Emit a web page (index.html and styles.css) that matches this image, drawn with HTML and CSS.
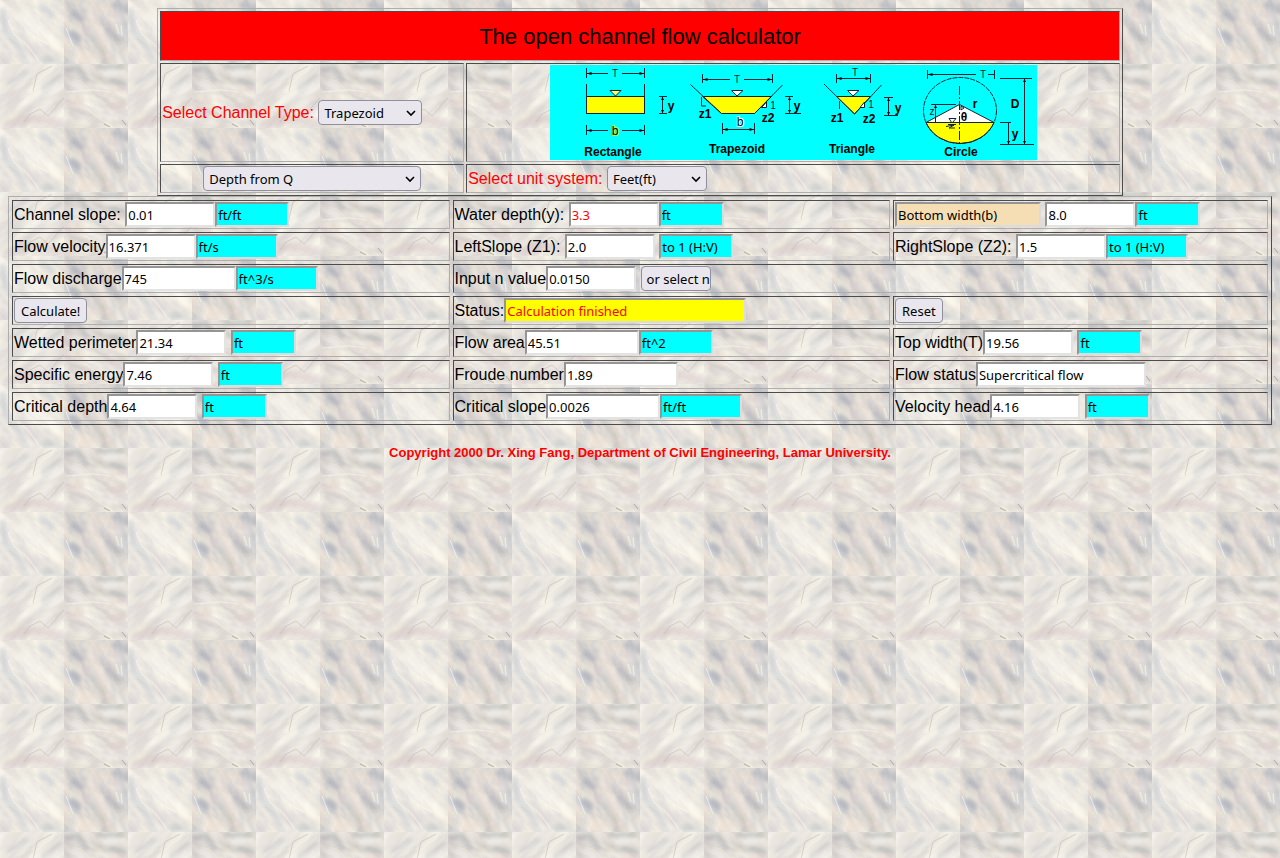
FILE: index.html
```html
<!DOCTYPE html>
<html lang="en">
<head>
<meta charset="utf-8">
<title>The open channel flow calculator</title>
<link rel="stylesheet" href="styles.css">
</head>
<body>
<form>
<table class="setup">
<colgroup><col class="setup-type"><col></colgroup>
<tr><th colspan="2" class="title">The open channel flow calculator</th></tr>
<tr>
<td class="red"><label for="type">Select Channel Type:</label> <select id="type" class="select s-type"><option>Trapezoid</option><option>Rectangle</option><option>Triangle</option><option>Circle</option></select></td>
<td class="center">
<svg class="diagram" viewBox="0 0 487 95" role="img" aria-label="Channel cross sections">
<defs>
<marker id="arrow" viewBox="0 0 6 4" refX="6" refY="2" markerWidth="5" markerHeight="3" orient="auto-start-reverse"><path d="M0 0L6 2L0 4z"/></marker>
<marker id="tip" viewBox="0 0 3 3" refX="3" refY="1.500" markerWidth="3" markerHeight="3" orient="auto-start-reverse"><path d="M0 0L3 1.500L0 3z"/></marker>
</defs>
<rect width="487" height="95" fill="#0ff"/>
<g stroke="#123" fill="none">
<path d="M36.500 19V31M94.500 19V31M36.500 3V13M94.500 3V13M36.500 60V70M94.500 60V70M109 31.500H117M109 48.500H117"/>
<path d="M58 8.500H37" marker-end="url(#arrow)"/><path d="M72 8.500H94" marker-end="url(#arrow)"/>
<path d="M58 65.500H37" marker-end="url(#arrow)"/><path d="M72 65.500H94" marker-end="url(#arrow)"/>
<path d="M112.500 32V48" marker-start="url(#tip)" marker-end="url(#tip)"/>
<rect x="36.500" y="31.500" width="58" height="17" fill="#ff0"/>
<path d="M60 25.500H71L65.500 31z" fill="#ff6"/>
<path d="M152.500 31.500H221.500L204.500 48.500H171.500z" fill="#ff0"/>
<path d="M140.500 19.500L171.500 48.500M204.500 48.500L232.500 20M152.500 9V18M222.500 9V18M172.500 58V69M204.500 58V69M151.500 32V41H156M235 31.500H243M235 48.500H251"/>
<path d="M180 14.500H153" marker-end="url(#arrow)"/><path d="M194 14.500H222" marker-end="url(#arrow)"/>
<path d="M173 64.500H204" marker-start="url(#arrow)" marker-end="url(#arrow)"/>
<path d="M239.500 32V48" marker-start="url(#tip)" marker-end="url(#tip)"/>
<path d="M181.500 25.500H193L187 31zM211.500 42.500H216.500V37z" fill="#fff"/>
<path d="M286.500 31.500H320.500L304.500 49z" fill="#ff0"/>
<path d="M274 19L304.500 49L331.500 20M286.500 9V18M320.500 9V18M289.500 36V44M334 32.500H343M334 50.500H348"/>
<path d="M287 13.500H320" marker-start="url(#arrow)" marker-end="url(#arrow)"/>
<path d="M338.500 33V50" marker-start="url(#tip)" marker-end="url(#tip)"/>
<path d="M297.500 25.500H309L303 31zM310 42.500H314.500V37z" fill="#fff"/>
<path d="M376 57.500H444A36.500 33 0 0 1 376 57.500z" fill="#ff0"/>
<path d="M376 57.500L409.500 39.500L444 57.500z" fill="#fff"/>
<ellipse cx="410" cy="45.500" rx="36.500" ry="33" stroke-dasharray="5 1"/>
<path d="M409.500 21V78" stroke-dasharray="9 2 2 2"/>
<path d="M377.500 5V14M444.500 5V14M381 39.500H406M450 13.500H482M450 79.500H484M450 57.500H461M398 59.500H406M396 61.500L404 60L399 63H405"/>
<path d="M426 9.500H378" marker-end="url(#arrow)"/><path d="M438 9.500H444"/>
<path d="M385.500 40V57M458.500 58V79" marker-start="url(#tip)" marker-end="url(#tip)"/>
<path d="M474.500 14V79" marker-start="url(#tip)" marker-end="url(#tip)"/>
<path d="M399 53.500H406L402 58zM411 41V45L414 43z" fill="#fff"/>
</g>
<g class="dim"><text x="65" y="12">T</text><text x="187" y="18">T</text><text x="305" y="11">T</text><text x="433" y="13">T</text><text x="382" y="50">z</text><text x="223" y="44">1</text><text x="321" y="43">1</text></g>
<g class="var"><text x="65" y="70" class="lime">b</text><text x="190" y="61" class="pale">b</text><text x="121" y="45">y</text><text x="247" y="45">y</text><text x="348" y="47">y</text><text x="465" y="73">y</text><text x="155" y="53">z1</text><text x="218" y="57">z2</text><text x="287" y="57">z1</text><text x="319" y="58">z2</text><text x="425" y="43">r</text><text x="414" y="56">θ</text><text x="465" y="43">D</text></g>
<g class="name"><text x="63" y="91">Rectangle</text><text x="187" y="88">Trapezoid</text><text x="302" y="88">Triangle</text><text x="411" y="91">Circle</text></g>
</svg>
</td>
</tr>
<tr>
<td class="center"><select class="select s-mode" aria-label="Calculation mode"><option>Depth from Q</option></select></td>
<td class="red"><label for="units">Select unit system:</label> <select id="units" class="select s-unit"><option>Feet(ft)</option><option>Meter(m)</option></select></td>
</tr>
</table>

<table class="values">
<colgroup><col class="values-a"><col class="values-b"><col></colgroup>
<tr>
<td><label for="slope">Channel slope:</label> <input id="slope" class="box w90" value="0.01"><input class="box unit w74" value="ft/ft" aria-label="Slope unit"></td>
<td><label for="depth">Water depth(y):</label> <input id="depth" class="box w90 red" value="3.3"><input class="box unit w65" value="ft" aria-label="Depth unit"></td>
<td><input class="box wheat w146" value="Bottom width(b)" aria-label="Dimension name"> <input class="box w90" value="8.0" aria-label="Bottom width"><input class="box unit w65" value="ft" aria-label="Width unit"></td>
</tr>
<tr>
<td><label for="vel">Flow velocity</label><input id="vel" class="box w90" value="16.371"><input class="box unit w82" value="ft/s" aria-label="Velocity unit"></td>
<td><label for="z1">LeftSlope (Z1):</label> <input id="z1" class="box w90" value="2.0"> <input class="box unit w74" value="to 1 (H:V)" aria-label="Left slope unit"></td>
<td><label for="z2">RightSlope (Z2):</label> <input id="z2" class="box w90" value="1.5"><input class="box unit w82" value="to 1 (H:V)" aria-label="Right slope unit"></td>
</tr>
<tr>
<td><label for="flow">Flow discharge</label><input id="flow" class="box w114" value="745"><input class="box unit w82" value="ft^3/s" aria-label="Discharge unit"></td>
<td colspan="2"><label for="n">Input n value</label><input id="n" class="box w90" value="0.0150"> <button type="button" class="button pick">or select n</button></td>
</tr>
<tr>
<td><button type="button" class="button">Calculate!</button></td>
<td><label for="status">Status:</label><input id="status" class="box status w242" value="Calculation finished"></td>
<td><button type="reset" class="button">Reset</button></td>
</tr>
<tr>
<td><label for="perim">Wetted perimeter</label><input id="perim" class="box w90" value="21.34"> <input class="box unit w65" value="ft" aria-label="Perimeter unit"></td>
<td><label for="area">Flow area</label><input id="area" class="box w114" value="45.51"><input class="box unit w74" value="ft^2" aria-label="Area unit"></td>
<td><label for="top">Top width(T)</label><input id="top" class="box w90" value="19.56"> <input class="box unit w65" value="ft" aria-label="Top width unit"></td>
</tr>
<tr>
<td><label for="energy">Specific energy</label><input id="energy" class="box w90" value="7.46"> <input class="box unit w65" value="ft" aria-label="Energy unit"></td>
<td><label for="froude">Froude number</label><input id="froude" class="box w114" value="1.89"></td>
<td><label for="state">Flow status</label><input id="state" class="box w170" value="Supercritical flow"></td>
</tr>
<tr>
<td><label for="cdepth">Critical depth</label><input id="cdepth" class="box w90" value="4.64"> <input class="box unit w65" value="ft" aria-label="Critical depth unit"></td>
<td><label for="cslope">Critical slope</label><input id="cslope" class="box w114" value="0.0026"><input class="box unit w82" value="ft/ft" aria-label="Critical slope unit"></td>
<td><label for="head">Velocity head</label><input id="head" class="box w90" value="4.16"> <input class="box unit w65" value="ft" aria-label="Head unit"></td>
</tr>
</table>
</form>
<p class="copyright">Copyright 2000 Dr. Xing Fang, Department of Civil Engineering, Lamar University.</p>
</body>
</html>
```

FILE: styles.css
```css
body {
  margin: 8px;
  font: 16px/25px Helvetica, "Liberation Sans", Arial, sans-serif;
  color: #000;
  background-color: #e4dfda;
  /* marble: four 64px stones in a repeating 128px tile */
  background-image: url("data:image/svg+xml,%3Csvg xmlns='http://www.w3.org/2000/svg' width='128' height='128'%3E%3Cdefs%3E%3Cfilter id='a' x='0' y='0' width='1' height='1' color-interpolation-filters='sRGB'%3E%3CfeTurbulence type='fractalNoise' baseFrequency='.035 .1' numOctaves='4' seed='4'/%3E%3CfeColorMatrix values='.2 .03 0 0 .815 .17 .05 0 0 .805 .1 .05 .03 0 .795 0 0 0 0 1'/%3E%3C/filter%3E%3Cfilter id='b' x='0' y='0' width='1' height='1' color-interpolation-filters='sRGB'%3E%3CfeTurbulence type='fractalNoise' baseFrequency='.04 .09' numOctaves='4' seed='12'/%3E%3CfeColorMatrix values='.27 .03 0 0 .72 .22 .08 0 0 .7 .15 .1 .03 0 .69 0 0 0 0 1'/%3E%3C/filter%3E%3Cfilter id='c' x='0' y='0' width='1' height='1' color-interpolation-filters='sRGB'%3E%3CfeTurbulence type='fractalNoise' baseFrequency='.03 .1' numOctaves='4' seed='21'/%3E%3CfeColorMatrix values='.16 .03 0 0 .825 .18 .03 0 0 .8 .14 .05 .03 0 .77 0 0 0 0 1'/%3E%3C/filter%3E%3Cfilter id='d' x='0' y='0' width='1' height='1' color-interpolation-filters='sRGB'%3E%3CfeTurbulence type='fractalNoise' baseFrequency='.04 .09' numOctaves='4' seed='33'/%3E%3CfeColorMatrix values='.22 .04 0 0 .77 .24 .04 0 0 .74 .18 .08 .03 0 .71 0 0 0 0 1'/%3E%3C/filter%3E%3Cfilter id='s'%3E%3CfeGaussianBlur stdDeviation='2'/%3E%3C/filter%3E%3C/defs%3E%3Csvg width='64' height='64'%3E%3Crect x='-30' y='-70' width='150' height='140' transform='rotate(50)' filter='url(%23a)'/%3E%3Cg filter='url(%23s)' fill='none' stroke-width='5' opacity='.4'%3E%3Cpath d='M3 8L5 30L18 46L26 60M40 6L54 17M42 60H54' stroke='%23a6b8c8'/%3E%3Cpath d='M0 52L8 64M20 34L34 56' stroke='%23b8a8b8' stroke-width='3'/%3E%3Cpath d='M20 12L38 30L58 47' stroke='%23fffdf4' stroke-width='12'/%3E%3C/g%3E%3Cpath d='M8 20L14 34L28 46L38 60M24 28L36 38L48 44' fill='none' stroke='%23fffbf0' opacity='.6'/%3E%3C/svg%3E%3Csvg x='64' width='64' height='64'%3E%3Crect x='-30' y='-70' width='150' height='140' transform='rotate(60)' filter='url(%23b)'/%3E%3Cg filter='url(%23s)' fill='none' stroke-width='7' opacity='.4'%3E%3Cpath d='M7 12L20 20M6 32L16 40M42 28L58 42M50 2L64 12' stroke='%238993a6'/%3E%3Cpath d='M34 3L30 20L42 50M14 56H50' stroke='%23eadbd0' stroke-width='8'/%3E%3Cpath d='M42 18L54 22' stroke='%23fff' stroke-width='4'/%3E%3C/g%3E%3Cpath d='M52 24L55 34M57 25L58 36M2 28L9 46' fill='none' stroke='%23fff' opacity='.6'/%3E%3C/svg%3E%3Csvg y='64' width='64' height='64'%3E%3Crect x='-60' y='-10' width='150' height='140' transform='rotate(-40)' filter='url(%23c)'/%3E%3Cg filter='url(%23s)' fill='none' stroke-width='4' opacity='.35'%3E%3Cpath d='M8 20L28 7M41 26L62 10' stroke='%2399a0b2'/%3E%3Cpath d='M4 60L30 55L60 58' stroke='%23d4bdbd' stroke-width='8'/%3E%3C/g%3E%3Cpath d='M24 58L30 50L40 45L48 52L64 34M33 27L37 10L52 2' fill='none' stroke='%23a9978d' opacity='.35'/%3E%3C/svg%3E%3Csvg x='64' y='64' width='64' height='64'%3E%3Crect x='-30' y='-70' width='150' height='140' transform='rotate(25)' filter='url(%23d)'/%3E%3Cg filter='url(%23s)' fill='none' stroke-width='5' opacity='.4'%3E%3Cpath d='M1 6L14 4L24 18M32 3H58M44 16L62 20' stroke='%23889299'/%3E%3Cpath d='M2 38H20M44 42H60M44 26H60' stroke='%23d4b9b4'/%3E%3Cpath d='M6 20L18 26M40 9L54 8' stroke='%23fff'/%3E%3C/g%3E%3Cpath d='M2 28L30 26L46 28M22 44L33 53L48 62' fill='none' stroke='%23fff6e4' opacity='.6'/%3E%3Cpath d='M40 60L46 63M58 56L62 61' fill='none' stroke='%23777' opacity='.5'/%3E%3C/svg%3E%3C/svg%3E");
}

form { margin: 0; }

table {
  border: 1px solid;
  border-color: #aeaeae #4c4c4c #4c4c4c #aeaeae;
  border-collapse: separate;
}

th, td {
  border: 1px solid;
  border-color: #4c4c4c #aeaeae #aeaeae #4c4c4c;
  padding: 1px;
  text-align: left;
  white-space: nowrap;
}

.setup { width: 76.4%; margin: 0 auto; border-spacing: 2px; }
.setup-type { width: 304px; }
.values { width: 100%; border-spacing: 3px; table-layout: fixed; }
.values-a, .values-b { width: 35%; }

.setup .title {
  height: 46px;
  background: #f00;
  font-size: 22px;
  font-weight: 400;
  text-align: center;
}

.setup .center { text-align: center; }
.red { color: #f00; }

.diagram { display: block; width: 487px; height: 95px; margin: 0 auto; }
.diagram text { font-family: "Liberation Sans", Arial, sans-serif; text-anchor: middle; }
.dim { font-size: 10px; fill: #123; }
.var { font-size: 12px; font-weight: 700; }
.name { font-size: 12px; font-weight: 700; }
.lime, .pale { font-weight: 400; paint-order: stroke; stroke: #fff; stroke-width: 2px; }
.lime { stroke: #9f3; }

.box, .button, .select {
  box-sizing: border-box;
  height: 25px;
  margin: 0;
  font: 13px "Noto Sans", sans-serif;
  color: #000;
  vertical-align: top;
}

.box {
  padding: 1px;
  border: 2px solid;
  border-color: #959595 #e3e3e3 #e3e3e3 #959595;
  background: #fff;
}

.box.red, .status { color: #f00; }
.unit { background: #0ff; }
.status { background: #ff0; }
.wheat { background: #f5deb3; }
.unit, .status, .wheat { border-right-color: #dcdcdc; border-bottom-color: #dcdcdc; }

.button, .select {
  border: 1px solid #8f8f9d;
  border-radius: 4px;
  background: #e9e7ed;
}

.button { padding: 0 6px; }
.pick { width: 70px; overflow: hidden; text-align: left; padding: 0 0 0 5px; }

.select {
  appearance: none;
  padding: 0 20px 0 5px;
  background: #e9e7ed url("data:image/svg+xml,%3Csvg xmlns='http://www.w3.org/2000/svg' width='10' height='8'%3E%3Cpath d='M1 2L5 6L9 2' fill='none' stroke='black' stroke-width='1.6'/%3E%3C/svg%3E") no-repeat right 5px center;
}

.s-type { width: 104px; }
.s-mode { width: 218px; }
.s-unit { width: 100px; }

.w65 { width: 65px; }
.w74 { width: 74px; }
.w82 { width: 82px; }
.w90 { width: 90px; }
.w114 { width: 114px; }
.w146 { width: 146px; }
.w170 { width: 170px; }
.w242 { width: 242px; }

.copyright {
  margin: 15px 0;
  color: #f00;
  font-size: 13px;
  font-weight: 700;
  text-align: center;
}
```
